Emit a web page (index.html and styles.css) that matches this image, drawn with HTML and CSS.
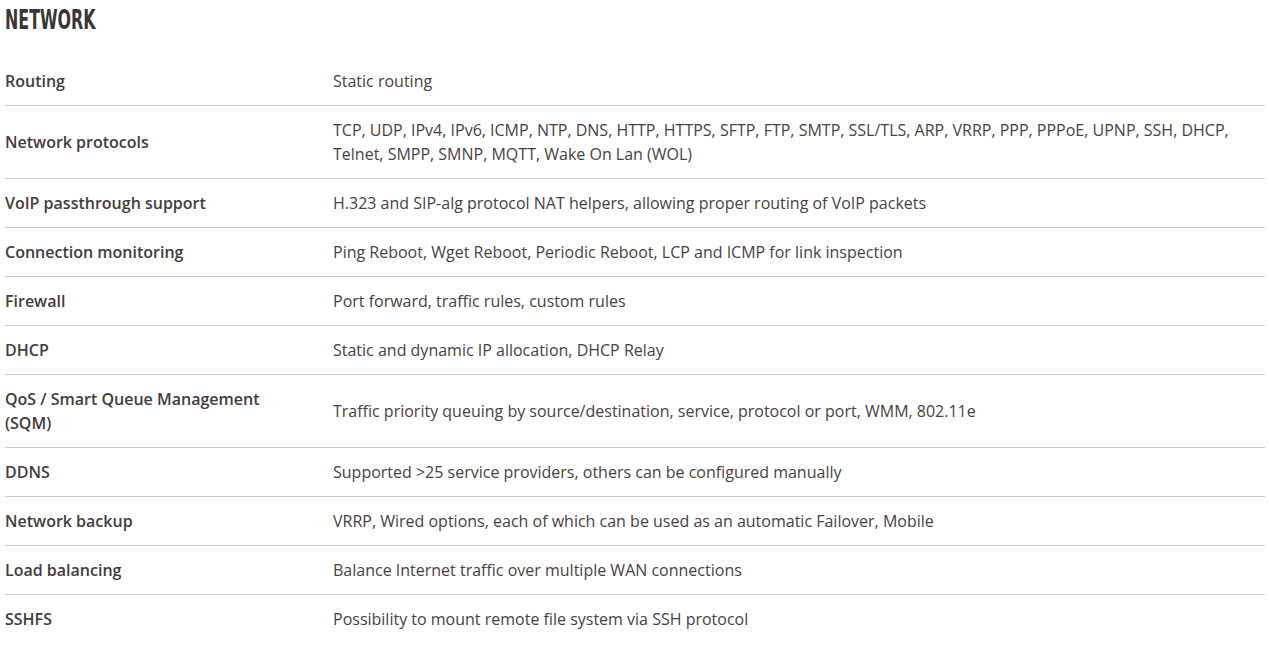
FILE: index.html
```html
<!DOCTYPE html>
<html>
<head>
<meta charset="utf-8">
<link rel="stylesheet" href="styles.css">
</head>
<body>
<div class="page">
  <div class="head"><h2 class="title">NETWORK</h2></div>
  <div class="spec">
    <div class="row"><div class="label">Routing</div><div class="value">Static routing</div></div>
    <div class="row"><div class="label">Network protocols</div><div class="value">TCP, UDP, IPv4, IPv6, ICMP, NTP, DNS, HTTP, HTTPS, SFTP, FTP, SMTP, SSL/TLS, ARP, VRRP, PPP, PPPoE, UPNP, SSH, DHCP, Telnet, SMPP, SMNP, MQTT, Wake On Lan (WOL)</div></div>
    <div class="row"><div class="label">VoIP passthrough support</div><div class="value">H.323 and SIP-alg protocol NAT helpers, allowing proper routing of VoIP packets</div></div>
    <div class="row"><div class="label">Connection monitoring</div><div class="value">Ping Reboot, Wget Reboot, Periodic Reboot, LCP and ICMP for link inspection</div></div>
    <div class="row"><div class="label">Firewall</div><div class="value">Port forward, traffic rules, custom rules</div></div>
    <div class="row"><div class="label">DHCP</div><div class="value">Static and dynamic IP allocation, DHCP Relay</div></div>
    <div class="row"><div class="label">QoS / Smart Queue Management (SQM)</div><div class="value">Traffic priority queuing by source/destination, service, protocol or port, WMM, 802.11e</div></div>
    <div class="row"><div class="label">DDNS</div><div class="value">Supported &gt;25 service providers, others can be configured manually</div></div>
    <div class="row"><div class="label">Network backup</div><div class="value">VRRP, Wired options, each of which can be used as an automatic Failover, Mobile</div></div>
    <div class="row"><div class="label">Load balancing</div><div class="value">Balance Internet traffic over multiple WAN connections</div></div>
    <div class="row last"><div class="label">SSHFS</div><div class="value">Possibility to mount remote file system via SSH protocol</div></div>
  </div>
</div>
</body>
</html>
```

FILE: styles.css
```css
html, body {
  margin: 0;
  padding: 0;
  background: #ffffff;
}
.page {
  padding: 0 4px 0 5px;
  font-family: "Open Sans", "Noto Sans", sans-serif;
  color: #464040;
}
.head {
  height: 57px;
  padding-top: 6px;
  box-sizing: border-box;
}
.title {
  display: inline-block;
  margin: 0;
  font-family: "DejaVu Sans Condensed", "DejaVu Sans", sans-serif;
  font-weight: 700;
  font-size: 26px;
  line-height: 28px;
  color: #3a3636;
  transform: scaleX(0.68);
  transform-origin: left top;
}
.spec {
  display: flex;
  flex-direction: column;
}
.row {
  display: grid;
  grid-template-columns: 328px 1fr;
  align-items: center;
  padding: 12px 0;
  border-bottom: 1px solid #cccccc;
  font-size: 16px;
  line-height: 24px;
}
.row.last {
  border-bottom: none;
}
.label {
  font-weight: 600;
  padding-right: 40px;
  color: #433c3c;
}
.value {
  font-weight: 400;
  color: #4a4242;
}
```
